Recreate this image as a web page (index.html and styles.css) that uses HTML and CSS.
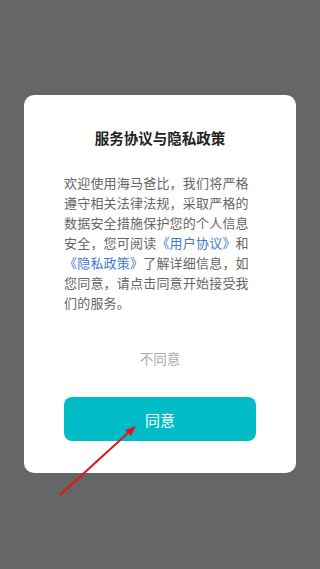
FILE: index.html
```
<!DOCTYPE html>
<html lang="zh-CN">
<head>
<meta charset="utf-8">
<title>服务协议与隐私政策</title>
<link rel="stylesheet" href="styles.css">
</head>
<body>
<div class="screen">
  <div class="card">
    <h1 class="title">服务协议与隐私政策</h1>
    <p class="body">欢迎使用海马爸比，我们将严格遵守相关法律法规，采取严格的数据安全措施保护您的个人信息安全，您可阅读<a class="link">《用户协议》</a>和<a class="link">《隐私政策》</a>了解详细信息，如您同意，请点击同意开始接受我们的服务。</p>
    <div class="decline">不同意</div>
    <div class="agree">同意</div>
  </div>
  <svg class="arrow" width="320" height="569" viewBox="0 0 320 569">
    <line x1="60" y1="495" x2="129" y2="432" stroke="#e3151b" stroke-width="2"/>
    <polygon points="136,426 125,430 131,436" fill="#e3151b"/>
  </svg>
</div>
</body>
</html>
```
FILE: styles.css
```
* { box-sizing: border-box; }
html, body { margin: 0; padding: 0; }
body {
  width: 320px;
  height: 569px;
  background: #666666;
  font-family: "Noto Sans CJK SC", "Noto Sans", sans-serif;
  overflow: hidden;
}
.screen {
  position: relative;
  width: 320px;
  height: 569px;
  padding: 95px 24px 0;
}
.card {
  background: #ffffff;
  border-radius: 10px;
  padding: 32px 40px 32px;
  display: flex;
  flex-direction: column;
  align-items: stretch;
}
.title {
  margin: 0;
  font-size: 14.5px;
  line-height: 22px;
  font-weight: 600;
  color: #222222;
  text-align: center;
}
.body {
  margin: 24px 0 0;
  font-size: 13px;
  letter-spacing: 0.2px;
  line-height: 20px;
  color: #666666;
}
.link {
  color: #3f78d8;
}
.decline {
  margin-top: 35px;
  text-align: center;
  font-size: 13.5px;
  line-height: 20px;
  color: #aaaaaa;
}
.agree {
  margin-top: 29px;
  height: 44px;
  border-radius: 8px;
  background: #00bcc6;
  color: #ffffff;
  font-size: 15px;
  display: flex;
  align-items: center;
  justify-content: center;
}
.arrow {
  position: absolute;
  left: 0;
  top: 0;
}
```
